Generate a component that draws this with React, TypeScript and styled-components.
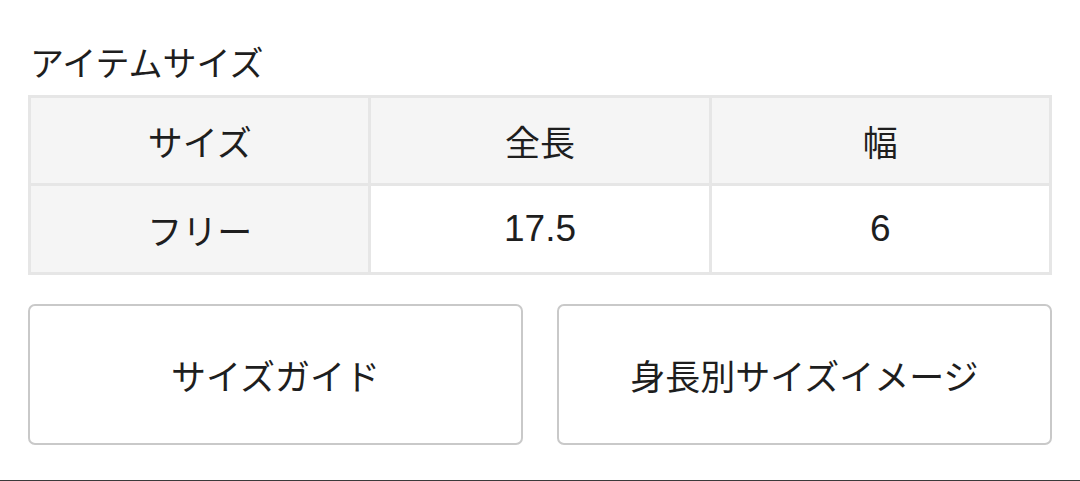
import React from "react";
import styled, { createGlobalStyle } from "styled-components";

type Row = { label: string; length: string; width: string };

const rows: Row[] = [{ label: "フリー", length: "17.5", width: "6" }];

export default function App() {
  return (
    <>
      <GlobalStyle />
      <Page>
        <Title>アイテムサイズ</Title>
        <SizeTable>
          <thead>
            <tr>
              <HeadCell>サイズ</HeadCell>
              <HeadCell>全長</HeadCell>
              <HeadCell>幅</HeadCell>
            </tr>
          </thead>
          <tbody>
            {rows.map((row) => (
              <tr key={row.label}>
                <Cell shaded>{row.label}</Cell>
                <Cell numeric>{row.length}</Cell>
                <Cell numeric>{row.width}</Cell>
              </tr>
            ))}
          </tbody>
        </SizeTable>
        <ButtonRow>
          <GuideButton>サイズガイド</GuideButton>
          <GuideButton>身長別サイズイメージ</GuideButton>
        </ButtonRow>
      </Page>
      <BottomRule />
    </>
  );
}

const GlobalStyle = createGlobalStyle`
  body {
    margin: 0;
    background: #fff;
    color: #1e1e1e;
    font-family: "Liberation Sans", "Noto Sans CJK JP", sans-serif;
  }
`;

const Page = styled.div`
  display: flex;
  flex-direction: column;
  width: 1024px;
  padding: 42px 0 35px 28px;
  box-sizing: content-box;
`;

const Title = styled.h2`
  flex: none;
  margin: 0 0 0 2px;
  height: 53px;
  font-size: 34px;
  font-weight: 400;
  line-height: 44px;
`;

const SizeTable = styled.table`
  flex: none;
  width: 100%;
  border-collapse: collapse;
  table-layout: fixed;
  border: 3px solid #e6e6e6;
`;

const HeadCell = styled.th`
  height: 85px;
  padding: 0;
  border: 3px solid #e6e6e6;
  background: #f5f5f5;
  font-size: 35px;
  font-weight: 400;
  text-align: center;
  vertical-align: middle;
`;

const Cell = styled.td<{ shaded?: boolean; numeric?: boolean }>`
  height: 86px;
  padding: 0;
  border: 3px solid #e6e6e6;
  background: ${({ shaded }) => (shaded ? "#f5f5f5" : "#fff")};
  font-size: ${({ numeric }) => (numeric ? "37px" : "35px")};
  text-align: center;
  vertical-align: middle;
`;

const ButtonRow = styled.div`
  flex: none;
  display: grid;
  grid-template-columns: 1fr 1fr;
  gap: 34px;
  margin-top: 29px;
`;

const GuideButton = styled.button`
  height: 141px;
  border: 2px solid #c9c9c9;
  border-radius: 7px;
  background: #fff;
  color: #1e1e1e;
  font-family: inherit;
  font-size: 35px;
  cursor: pointer;
`;

const BottomRule = styled.div`
  height: 2px;
  background: #3a3a3a;
`;
